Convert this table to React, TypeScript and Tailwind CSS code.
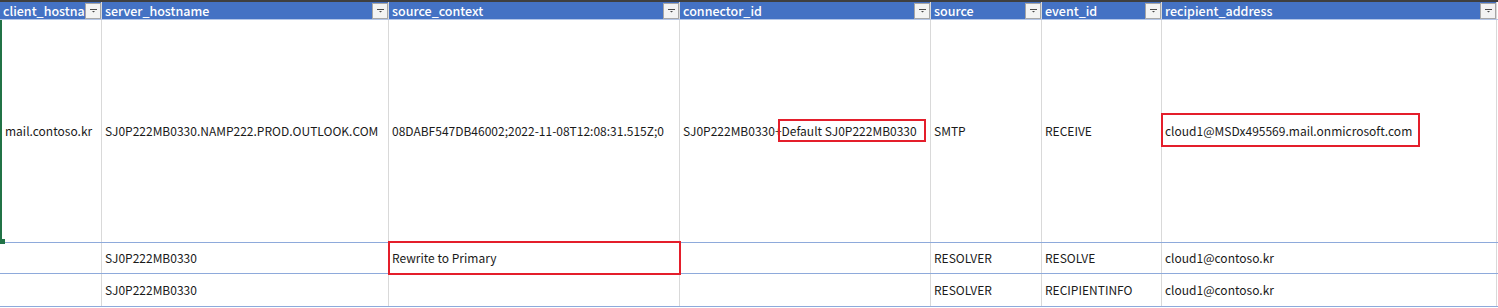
import React from "react";

const cols = [
  "client_hostname",
  "server_hostname",
  "source_context",
  "connector_id",
  "source",
  "event_id",
  "recipient_address",
];

const gridCols =
  "grid grid-cols-[102px_287px_291px_251px_111px_120px_335px_1fr]";

function FilterButton() {
  return (
    <div className="absolute right-0 top-[1px] flex h-[16px] w-[16px] items-center justify-center border border-[#a6a6a6] bg-[#f3f3f3]">
      <svg width="9" height="6" viewBox="0 0 9 6">
        <rect x="1" y="1" width="7" height="1" fill="#4a4a4a" />
        <path d="M3 3 L6 3 L4.5 4.5 Z" fill="#4a4a4a" />
      </svg>
    </div>
  );
}

function Cell({
  children,
  className = "",
}: {
  children?: React.ReactNode;
  className?: string;
}) {
  return (
    <div
      className={`relative flex items-center whitespace-nowrap border-r border-[#d9d9d9] pl-[3px] ${className}`}
    >
      {children}
    </div>
  );
}

function RedBox({ className }: { className: string }) {
  return (
    <div
      className={`pointer-events-none absolute border-2 border-[#e41e2b] ${className}`}
    />
  );
}

export default function App() {
  return (
    <div
      className="relative h-[308px] w-[1498px] overflow-hidden bg-white text-[12px] text-[#1a1a1a]"
      style={{ fontFamily: '"Noto Sans CJK KR", "Noto Sans", sans-serif' }}
    >
      <div className="h-[2px] bg-[#3f3f3f]" />

      {/* header */}
      <div className={`${gridCols} h-[18px] border-b border-[#b4c6e7]`}>
        {cols.map((c) => (
          <div
            key={c}
            className="relative overflow-hidden whitespace-nowrap border-r border-[#d9d9d9] bg-[#4472c4] pl-[3px] text-[12.5px] font-medium leading-[17px] text-white"
          >
            {c}
            <FilterButton />
          </div>
        ))}
        <div />
      </div>

      {/* row 1 */}
      <div className={`${gridCols} h-[223px] border-b border-[#8eaadb]`}>
        <Cell className="overflow-hidden border-l-2 border-l-[#217346] pl-[2px]">
          mail.contoso.kr
        </Cell>
        <Cell>SJ0P222MB0330.NAMP222.PROD.OUTLOOK.COM</Cell>
        <Cell className="overflow-hidden">
          08DABF547DB46002;2022-11-08T12:08:31.515Z;0
        </Cell>
        <Cell>SJ0P222MB0330+Default SJ0P222MB0330</Cell>
        <Cell>SMTP</Cell>
        <Cell>RECEIVE</Cell>
        <Cell>cloud1@MSDx495569.mail.onmicrosoft.com</Cell>
        <div />
      </div>

      {/* row 2 */}
      <div className={`${gridCols} h-[31px] border-b border-[#8eaadb]`}>
        <Cell />
        <Cell>SJ0P222MB0330</Cell>
        <Cell>Rewrite to Primary</Cell>
        <Cell />
        <Cell>RESOLVER</Cell>
        <Cell>RESOLVE</Cell>
        <Cell>cloud1@contoso.kr</Cell>
        <div />
      </div>

      {/* row 3 */}
      <div className={`${gridCols} h-[33px] border-b border-[#8eaadb]`}>
        <Cell />
        <Cell>SJ0P222MB0330</Cell>
        <Cell />
        <Cell />
        <Cell>RESOLVER</Cell>
        <Cell>RECIPIENTINFO</Cell>
        <Cell>cloud1@contoso.kr</Cell>
        <div />
      </div>

      {/* selection handle */}
      <div className="absolute left-0 top-[239px] h-[5px] w-[5px] bg-[#217346]" />

      <RedBox className="left-[778px] top-[119px] h-[23px] w-[148px]" />
      <RedBox className="left-[1161px] top-[113px] h-[34px] w-[259px]" />
      <RedBox className="left-[388px] top-[241px] h-[34px] w-[293px]" />
    </div>
  );
}
